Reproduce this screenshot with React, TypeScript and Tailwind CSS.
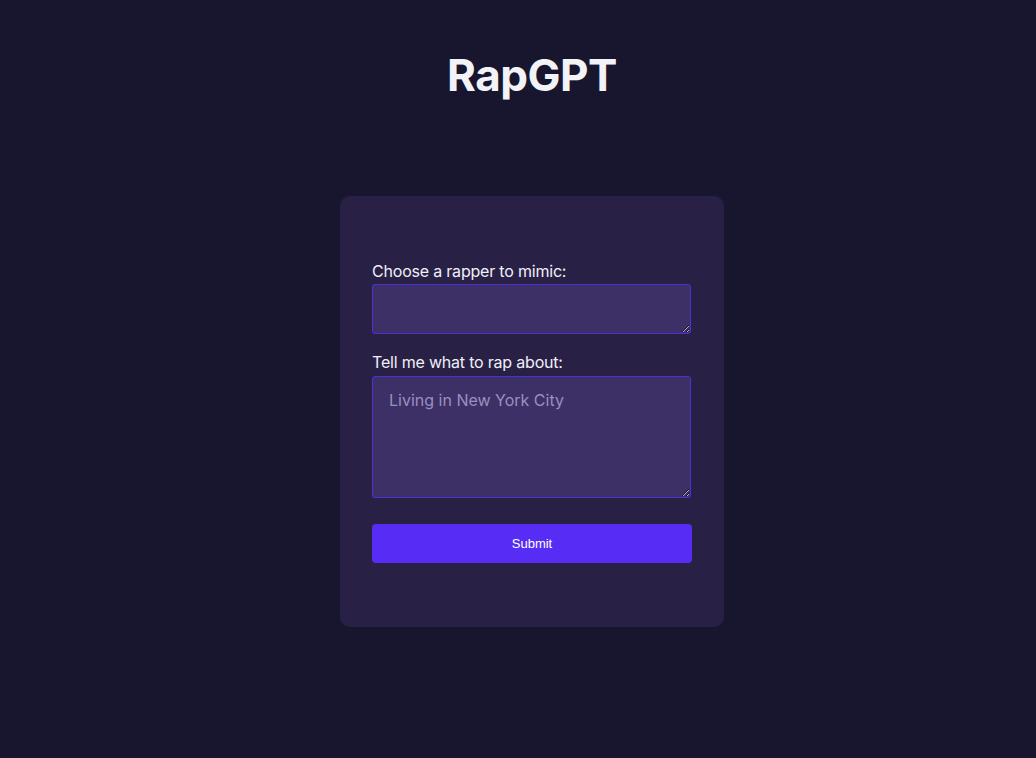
export default function App() {
  return (
    <div
      className="min-h-screen bg-[#18152f] flex flex-col items-center pl-[28px]"
      style={{ fontFamily: 'Inter, "Noto Sans", sans-serif' }}
    >
      <h1 className="mt-[48px] text-[44px] leading-[54px] font-bold text-[#f3f2f7] tracking-[-0.5px]">
        RapGPT
      </h1>

      <form className="mt-[94px] w-[384px] rounded-[10px] bg-[#282145] px-8 pt-[63px] pb-[64px] flex flex-col">
        <label className="text-[16px] leading-[24px] text-[#f1eff8] tracking-[-0.2px]">
          Choose a rapper to mimic:
        </label>
        <textarea
          className="mt-[1px] w-[319px] h-[50px] rounded-[3px] border border-[#4f2fd6] bg-[#3d3066] px-4 py-3 text-[16px] text-white outline-none"
        />

        <label className="mt-[16px] text-[16px] leading-[24px] text-[#f1eff8] tracking-[-0.2px]">
          Tell me what to rap about:
        </label>
        <textarea
          placeholder="Living in New York City"
          className="mt-[2px] w-[319px] h-[122px] rounded-[3px] border border-[#4f2fd6] bg-[#3d3066] px-4 py-[11px] text-[16px] leading-[24px] text-white placeholder:text-[#9a8fbf] outline-none"
        />

        <button
          type="button"
          className="mt-[26px] w-[320px] h-[39px] rounded-[4px] bg-[#572cf4] text-[13px] font-medium text-white"
          style={{ fontFamily: '"Liberation Sans", Arial, sans-serif' }}
        >
          Submit
        </button>
      </form>
    </div>
  )
}
